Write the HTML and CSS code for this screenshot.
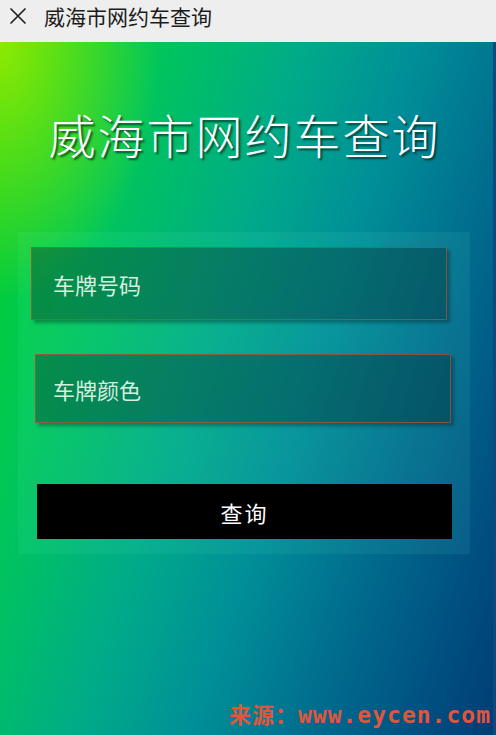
FILE: index.html
```html
<!DOCTYPE html>
<html lang="zh-CN">
<head>
<meta charset="utf-8">
<title>威海市网约车查询</title>
<link rel="stylesheet" href="styles.css">
</head>
<body>
<header class="topbar">
  <svg class="close-icon" width="18" height="18" viewBox="0 0 18 18" aria-hidden="true">
    <path d="M2 2 L16 16 M16 2 L2 16" stroke="#222" stroke-width="1.7" fill="none" stroke-linecap="round"/>
  </svg>
  <span class="topbar-title">威海市网约车查询</span>
</header>
<main class="stage">
  <h1 class="hero-title">威海市网约车查询</h1>
  <form class="panel">
    <input class="field field-plate" type="text" placeholder="车牌号码">
    <input class="field field-color" type="text" placeholder="车牌颜色">
    <button class="submit" type="button">查询</button>
  </form>
  <div class="watermark">来源：<span class="wm-url">www.eycen.com</span></div>
</main>
</body>
</html>
```
FILE: styles.css
```css
html, body {
  margin: 0;
  padding: 0;
}
body {
  width: 496px;
  height: 735px;
  overflow: hidden;
  font-family: "Noto Sans CJK SC", "Noto Sans", sans-serif;
  background: #eeeeee;
}
.topbar {
  height: 42px;
  box-sizing: border-box;
  background: #eeeeee;
  display: flex;
  align-items: flex-start;
  padding: 4px 0 0 9px;
}
.close-icon {
  margin-top: 3px;
  flex: none;
}
.topbar-title {
  margin-left: 17px;
  font-size: 21px;
  line-height: 24px;
  color: #1c1c1c;
}
.stage {
  position: relative;
  height: 693px;
  box-sizing: border-box;
  padding-top: 64px;
  border-right: 3px solid #0b4a80;
  background:
    radial-gradient(ellipse 160px 260px at 0 0, rgba(150, 235, 0, 0.95), rgba(150, 235, 0, 0) 100%),
    linear-gradient(108deg, #00d224 0%, #00c65a 22%, #00ab88 42%, #008f98 58%, #006d8e 74%, #004e80 90%, #003e74 100%);
}
.hero-title {
  margin: 0;
  text-align: center;
  font-weight: 300;
  font-size: 47px;
  line-height: 56px;
  letter-spacing: 2px;
  color: #ffffff;
  text-shadow: 2px 2px 2px rgba(0, 40, 30, 0.75);
  padding-right: 4px;
}
.panel {
  margin: 70px 0 0 18px;
  width: 452px;
  box-sizing: border-box;
  padding: 15px 0 15px 0;
  background: rgba(120, 255, 220, 0.08);
  display: flex;
  flex-direction: column;
  align-items: flex-start;
}
.field {
  box-sizing: border-box;
  width: 416px;
  margin: 0;
  border: 1px solid rgba(190, 80, 50, 0.7);
  background: rgba(0, 40, 40, 0.38);
  box-shadow: 3px 3px 3px rgba(0, 30, 30, 0.35);
  color: #e6f7ee;
  font-family: "Noto Sans CJK SC", "Noto Sans", sans-serif;
  font-size: 22px;
  padding: 0 0 0 21px;
  outline: none;
}
.field::placeholder {
  color: #d4efe0;
  opacity: 1;
}
.field-plate {
  height: 73px;
  margin-left: 13px;
}
.field-color {
  height: 69px;
  margin-left: 17px;
  margin-top: 34px;
  padding-left: 17px;
}
.submit {
  margin: 61px 0 0 19px;
  width: 415px;
  height: 55px;
  border: none;
  background: #000000;
  color: #ffffff;
  font-family: "Noto Sans CJK SC", "Noto Sans", sans-serif;
  font-size: 22px;
  letter-spacing: 2px;
  cursor: pointer;
}
.watermark {
  position: absolute;
  right: 2px;
  bottom: 5px;
  color: #e2553a;
  font-family: "Noto Sans CJK SC", sans-serif;
  font-weight: 700;
  font-size: 22px;
  line-height: 30px;
  letter-spacing: 1px;
}
.wm-url {
  font-family: "DejaVu Sans Mono", "Liberation Mono", monospace;
  font-weight: 700;
  font-size: 23px;
  letter-spacing: 1px;
}
```
